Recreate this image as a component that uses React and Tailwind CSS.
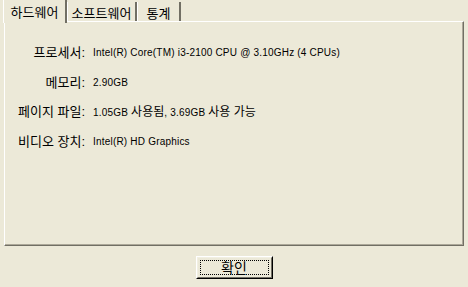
import React from 'react';

const font = { fontFamily: '"Liberation Sans", "Noto Sans CJK KR", sans-serif' };

const rows = [
  ['프로세서:', 'Intel(R) Core(TM) i3-2100 CPU @ 3.10GHz (4 CPUs)'],
  ['메모리:', '2.90GB'],
  ['페이지 파일:', '1.05GB 사용됨, 3.69GB 사용 가능'],
  ['비디오 장치:', 'Intel(R) HD Graphics'],
];

// hangul runs get a bigger size than latin, as in the old dialog font
const Value = ({ text }) =>
  text.split(/([가-힣][가-힣 ]*[가-힣]|[가-힣])/).map((part, i) =>
    /[가-힣]/.test(part) ? (
      <span key={i} className="text-[12px] tracking-normal">{part}</span>
    ) : (
      <span key={i}>{part}</span>
    )
  );

export default function App() {
  return (
    <div className="w-[468px] h-[287px] bg-[#ECE9D8] overflow-hidden text-[12px] text-black" style={font}>
      {/* tab strip */}
      <div className="flex items-end h-[21px] pl-[3px]">
        <div className="relative z-10 h-[23px] -mb-[2px] w-[64px] bg-[#ECE9D8] border-l border-white border-r-2 border-r-[#716F64] flex items-start justify-center pt-[3px] text-[13px]">
          하드웨어
        </div>
        <div className="h-[19px] w-[70px] border-l border-white border-r-2 border-r-[#716F64] flex items-start justify-center pt-[2px] text-[13px]">
          소프트웨어
        </div>
        <div className="h-[19px] w-[44px] border-l border-white border-r-2 border-r-[#716F64] flex items-start justify-center pt-[2px] text-[13px]">
          통계
        </div>
      </div>

      {/* panel */}
      <div className="ml-[4px] w-[460px] h-[225px] border-t border-l border-white border-r border-b border-r-[#716F64] border-b-[#716F64]">
        <div className="h-full border-r border-b border-r-[#ACA899] border-b-[#ACA899] pt-[16px]">
          {rows.map(([k, v]) => (
            <div key={k} className="flex items-center h-[29.5px]">
              <div className="w-[80px] text-right text-[13px] shrink-0">{k}</div>
              <div className="pl-[8px] text-[10px] tracking-[0.2px] whitespace-nowrap">
                <Value text={v} />
              </div>
            </div>
          ))}
        </div>
      </div>

      {/* button */}
      <div className="flex justify-center pt-[10px]">
        <div className="w-[77px] h-[23px] border border-t-white border-l-white border-r-black border-b-black">
          <div className="w-full h-full border border-t-[#F1EFE2] border-l-[#F1EFE2] border-r-[#716F64] border-b-[#716F64] p-[2px]">
            <div className="w-full h-full border border-dotted border-black flex items-center justify-center text-[14px] leading-none">
              확인
            </div>
          </div>
        </div>
      </div>
    </div>
  );
}
